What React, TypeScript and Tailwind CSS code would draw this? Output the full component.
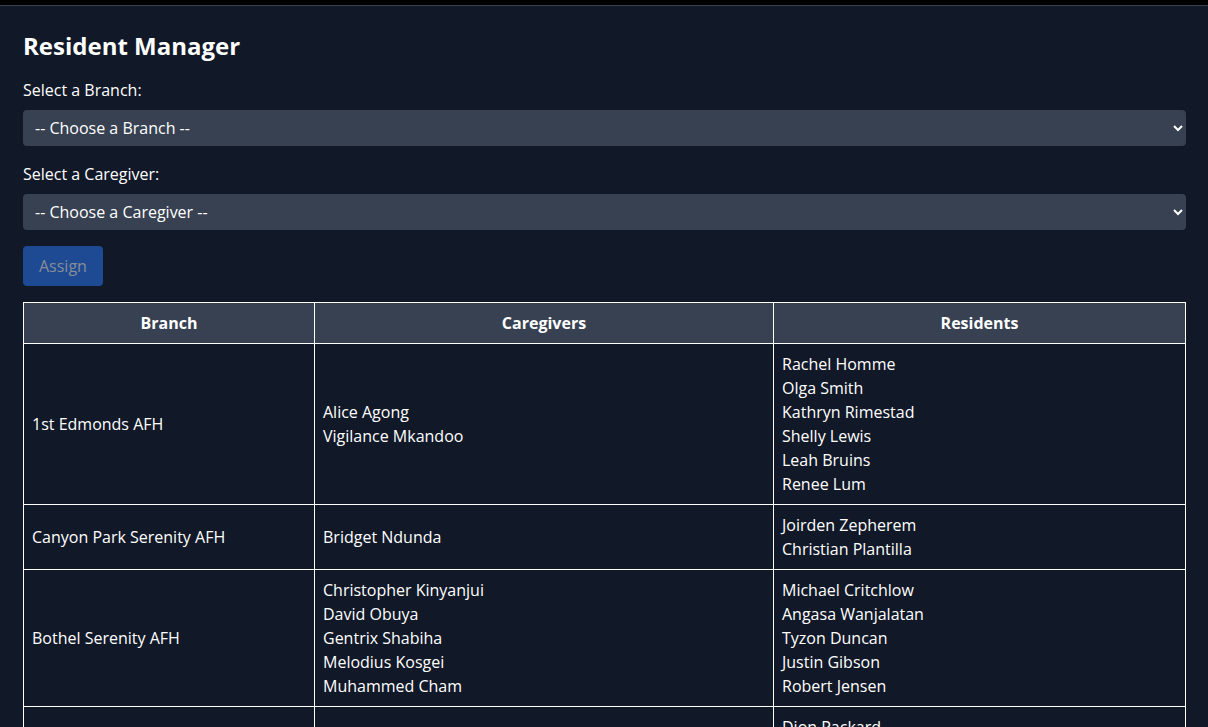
const rows = [
  {
    branch: "1st Edmonds AFH",
    caregivers: ["Alice Agong", "Vigilance Mkandoo"],
    residents: ["Rachel Homme", "Olga Smith", "Kathryn Rimestad", "Shelly Lewis", "Leah Bruins", "Renee Lum"],
  },
  {
    branch: "Canyon Park Serenity AFH",
    caregivers: ["Bridget Ndunda"],
    residents: ["Joirden Zepherem", "Christian Plantilla"],
  },
  {
    branch: "Bothel Serenity AFH",
    caregivers: ["Christopher Kinyanjui", "David Obuya", "Gentrix Shabiha", "Melodius Kosgei", "Muhammed Cham"],
    residents: ["Michael Critchlow", "Angasa Wanjalatan", "Tyzon Duncan", "Justin Gibson", "Robert Jensen"],
  },
  {
    branch: "Mill Creek Serenity AFH",
    caregivers: ["Grace Wambui", "Esther Njeri"],
    residents: ["Dion Packard", "Mary Collins", "George Hall", "Linda Park"],
  },
]

export default function App() {
  return (
    <div className="min-h-screen bg-[#111827] text-white font-['Open_Sans',sans-serif]">
      <div className="h-[6px] bg-black border-b border-[#3a3f4a]" />
      <div className="pl-[23px] pr-[22px] pt-6 pb-6">
        <h1 className="text-2xl font-bold mb-4">Resident Manager</h1>

        <label className="block mb-2">Select a Branch:</label>
        <select className="w-full h-9 px-2 mb-4 rounded bg-[#374151] text-white">
          <option>-- Choose a Branch --</option>
        </select>

        <label className="block mb-2">Select a Caregiver:</label>
        <select className="w-full h-9 px-2 mb-4 rounded bg-[#374151] text-white">
          <option>-- Choose a Caregiver --</option>
        </select>

        <button disabled className="h-10 px-4 rounded bg-[#1e4a93] text-[#878d99] mb-4">
          Assign
        </button>

        <table className="w-full border-collapse border border-white">
          <thead>
            <tr className="bg-[#374151]">
              <th className="w-[291px] border border-white p-2 font-bold">Branch</th>
              <th className="w-[459px] border border-white p-2 font-bold">Caregivers</th>
              <th className="border border-white p-2 font-bold">Residents</th>
            </tr>
          </thead>
          <tbody>
            {rows.map((r) => (
              <tr key={r.branch}>
                <td className="border border-white p-2">{r.branch}</td>
                <td className="border border-white p-2">
                  {r.caregivers.map((c) => (
                    <div key={c}>{c}</div>
                  ))}
                </td>
                <td className="border border-white p-2">
                  {r.residents.map((c) => (
                    <div key={c}>{c}</div>
                  ))}
                </td>
              </tr>
            ))}
          </tbody>
        </table>
      </div>
    </div>
  )
}
